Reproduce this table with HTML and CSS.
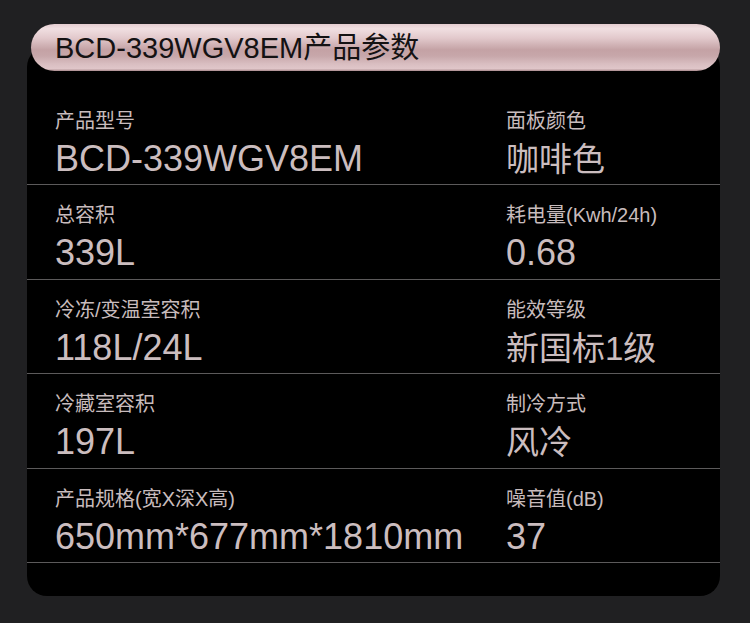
FILE: index.html
```html
<!DOCTYPE html>
<html lang="zh-CN">
<head>
<meta charset="utf-8">
<title>BCD-339WGV8EM产品参数</title>
<link rel="stylesheet" href="styles.css">
</head>
<body>
<div class="page">
  <div class="pill"><h1 class="title">BCD-339WGV8EM产品参数</h1></div>
  <div class="card">
    <div class="row">
      <div class="cell"><div class="label">产品型号</div><div class="value">BCD-339WGV8EM</div></div>
      <div class="cell"><div class="label">面板颜色</div><div class="value"><span class="cjk">咖啡色</span></div></div>
    </div>
    <div class="row">
      <div class="cell"><div class="label">总容积</div><div class="value">339L</div></div>
      <div class="cell"><div class="label">耗电量(Kwh/24h)</div><div class="value">0.68</div></div>
    </div>
    <div class="row">
      <div class="cell"><div class="label">冷冻/变温室容积</div><div class="value">118L/24L</div></div>
      <div class="cell"><div class="label">能效等级</div><div class="value"><span class="cjk">新国标1级</span></div></div>
    </div>
    <div class="row">
      <div class="cell"><div class="label">冷藏室容积</div><div class="value">197L</div></div>
      <div class="cell"><div class="label">制冷方式</div><div class="value"><span class="cjk">风冷</span></div></div>
    </div>
    <div class="row">
      <div class="cell"><div class="label">产品规格(宽X深X高)</div><div class="value">650mm*677mm*1810mm</div></div>
      <div class="cell"><div class="label">噪音值(dB)</div><div class="value">37</div></div>
    </div>
  </div>
</div>
</body>
</html>
```

FILE: styles.css
```css
html, body {
  margin: 0;
  padding: 0;
}
body {
  background: #202022;
  font-family: "Liberation Sans", "Noto Sans CJK SC", sans-serif;
  width: 750px;
  height: 623px;
  overflow: hidden;
}
.page {
  padding: 24px 0 0 27px;
  width: 693px;
}
.pill {
  position: relative;
  z-index: 1;
  margin-left: 4px;
  height: 47px;
  border-radius: 24px;
  background: linear-gradient(to bottom,
    #e4ccd0 0%,
    #f0dfe1 10%,
    #e2c9cc 30%,
    #c4a2a5 55%,
    #c7a7aa 68%,
    #d9bec1 85%,
    #e0c6c9 95%,
    #a88a8d 100%);
  padding-left: 24px;
  box-sizing: border-box;
}
.title {
  margin: 0;
  font-weight: normal;
  font-size: 29px;
  line-height: 49px;
  color: #141213;
  letter-spacing: 0;
  white-space: nowrap;
}
.card {
  margin-top: -24px;
  padding-top: 43.5px;
  height: 549px;
  box-sizing: border-box;
  background: #000;
  border-radius: 20px;
}
.row {
  display: grid;
  grid-template-columns: 451px 1fr;
  padding-left: 28px;
  height: 94.5px;
  box-sizing: border-box;
  border-bottom: 1px solid #5c5a5b;
}
.cell {
  padding-top: 20px;
}
.label {
  font-size: 20px;
  line-height: 20px;
  color: #c8bcbd;
  white-space: nowrap;
}
.value {
  margin-top: 10px;
  font-size: 36px;
  line-height: 36px;
  color: #cbbdbf;
  white-space: nowrap;
}
.cjk {
  font-size: 33px;
}
```
